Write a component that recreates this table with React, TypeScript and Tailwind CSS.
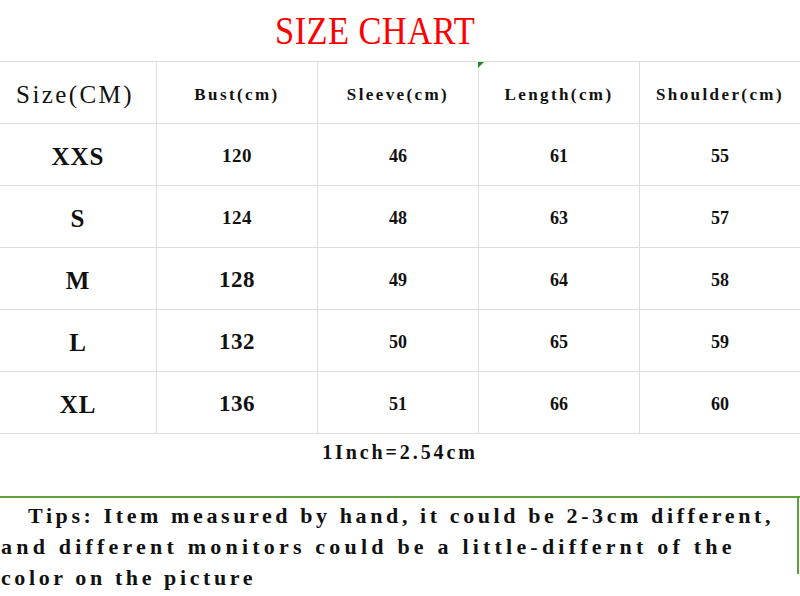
const columns = ['Bust(cm)', 'Sleeve(cm)', 'Length(cm)', 'Shoulder(cm)'];

const rows = [
  { size: 'XXS', values: ['120', '46', '61', '55'] },
  { size: 'S', values: ['124', '48', '63', '57'] },
  { size: 'M', values: ['128', '49', '64', '58'] },
  { size: 'L', values: ['132', '50', '65', '59'] },
  { size: 'XL', values: ['136', '51', '66', '60'] },
];

const serif = "font-['Liberation_Serif',serif]";

export default function App() {
  return (
    <div className={`${serif} w-[800px] h-[596px] bg-white overflow-hidden text-[#111]`}>
      {/* title */}
      <div className="h-[61px] flex items-start justify-center">
        <h1 className="mt-[10px] ml-[-50px] text-[41px] leading-[41px] tracking-[0.5px] text-[#ff0000] scale-x-[0.84]">
          SIZE CHART
        </h1>
      </div>

      {/* table */}
      <div className="relative border-t border-[#dedede]">
        <div className="absolute left-[478px] top-0 w-0 h-0 border-t-[6px] border-t-[#1e8a1e] border-r-[6px] border-r-transparent" />
        <div className="grid grid-cols-[156px_161px_161px_161px_161px] h-[62px] border-b border-[#dedede]">
          <div className="flex items-center justify-center text-[25px] tracking-[2.4px] pt-[4px] pr-[6px]">
            Size(CM)
          </div>
          {columns.map((c) => (
            <div
              key={c}
              className="font-bold flex items-center justify-center text-[17px] tracking-[2.4px] border-l border-[#dedede] pt-[4px]"
            >
              {c}
            </div>
          ))}
        </div>
        {rows.map((r, i) => (
          <div
            key={r.size}
            className="grid grid-cols-[156px_161px_161px_161px_161px] h-[62px] border-b border-[#dedede]"
          >
            <div className="font-bold flex items-center justify-center text-[25px] tracking-[1px] pt-[4px]">{r.size}</div>
            {r.values.map((v, j) => (
              <div
                key={j}
                className={`font-bold flex items-center justify-center border-l border-[#dedede] pt-[4px] ${
                  j === 0 ? (i < 2 ? 'text-[19px] tracking-[0.5px]' : 'text-[23px] tracking-[0.5px]') : 'text-[18px]'
                }`}
              >
                {v}
              </div>
            ))}
          </div>
        ))}
        <div className="h-[62px] flex justify-center pt-[4px]">
          <span className="font-bold text-[20px] tracking-[2.9px] leading-[28px]">1Inch=2.54cm</span>
        </div>
      </div>

      {/* tips */}
      <div className="border-t-2 border-[#5ea13b] relative">
        <div className="absolute right-[1px] top-0 w-[2px] h-[76px] bg-[#5ea13b]" />
        <div className="font-bold text-[22px] leading-[31px] tracking-[3.6px] pt-[2px] pl-[1px] whitespace-nowrap">
          <div className="pl-[27px]">Tips: Item measured by hand, it could be 2-3cm different,</div>
          <div className="tracking-[4.2px]">and different monitors could be a little-differnt of the</div>
          <div>color on the picture</div>
        </div>
      </div>
    </div>
  );
}
